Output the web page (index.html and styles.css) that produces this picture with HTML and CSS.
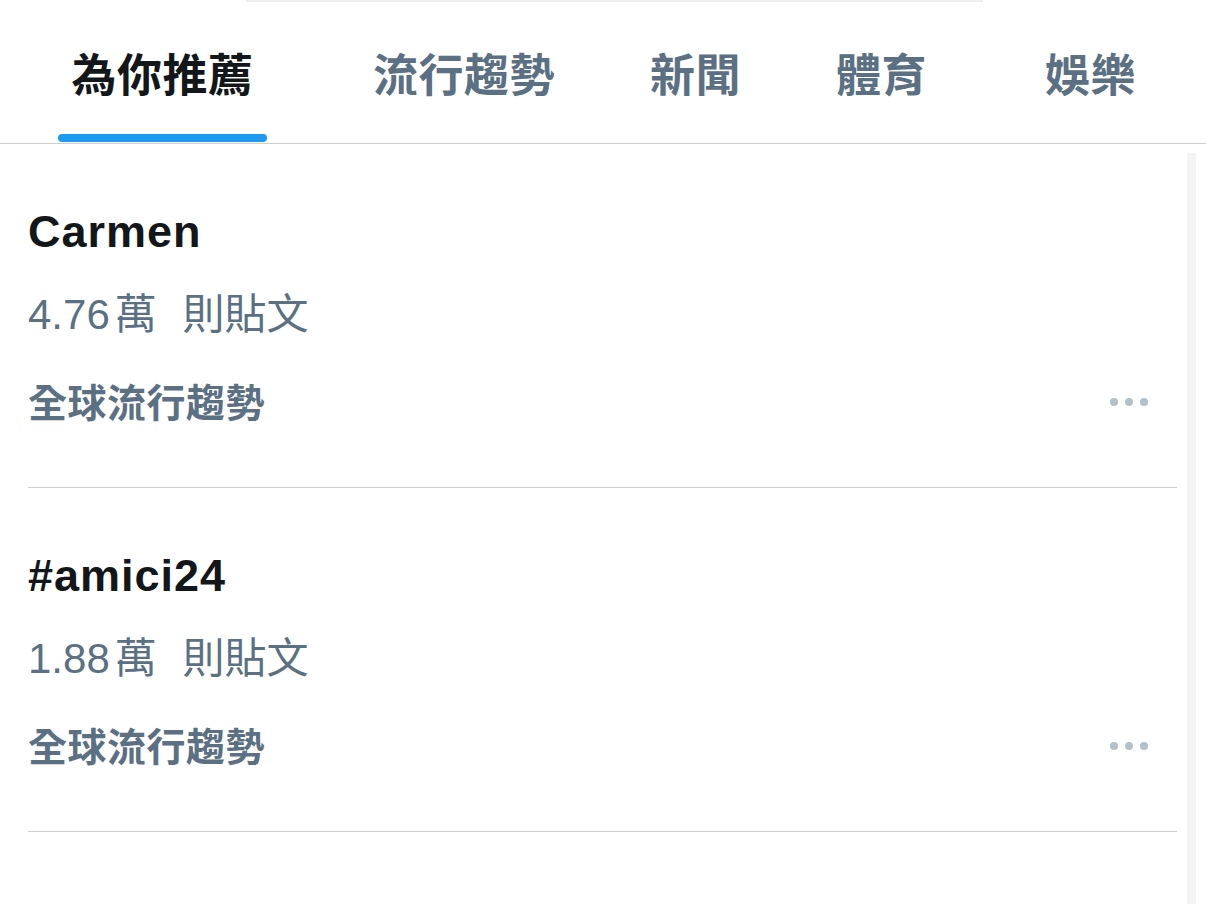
FILE: index.html
```html
<!DOCTYPE html>
<html lang="zh-Hant">
<head>
<meta charset="utf-8">
<title>探索</title>
<link rel="stylesheet" href="styles.css">
</head>
<body>
<div class="page">
  <div class="search-edge"></div>
  <nav class="tabs">
    <div class="tab tab-active">
      <span class="tab-label">為你推薦</span>
      <span class="tab-indicator"></span>
    </div>
    <div class="tab tab-trending"><span class="tab-label">流行趨勢</span></div>
    <div class="tab"><span class="tab-label">新聞</span></div>
    <div class="tab"><span class="tab-label">體育</span></div>
    <div class="tab tab-fun"><span class="tab-label">娛樂</span></div>
  </nav>
  <div class="feed">
    <div class="list">
      <div class="trend">
        <div class="trend-title">Carmen</div>
        <div class="trend-count"><span class="num">4.76</span>萬 則貼文</div>
        <div class="trend-meta">
          <span class="trend-context">全球流行趨勢</span>
          <span class="more"><i></i><i></i><i></i></span>
        </div>
      </div>
      <div class="trend">
        <div class="trend-title">#amici24</div>
        <div class="trend-count"><span class="num">1.88</span>萬 則貼文</div>
        <div class="trend-meta">
          <span class="trend-context">全球流行趨勢</span>
          <span class="more"><i></i><i></i><i></i></span>
        </div>
      </div>
    </div>
    <div class="scrollbar"></div>
  </div>
</div>
</body>
</html>
```

FILE: styles.css
```css
html, body {
  margin: 0;
  padding: 0;
  background: #ffffff;
}

body {
  font-family: "Liberation Sans", "Noto Sans CJK TC", sans-serif;
  color: #14171a;
  width: 1206px;
  height: 904px;
  overflow: hidden;
}

.page {
  display: flex;
  flex-direction: column;
  height: 904px;
}

.search-edge {
  width: 737px;
  height: 2px;
  margin: 0 0 0 246px;
  background: #efefef;
}

.tabs {
  display: flex;
  align-items: flex-start;
  height: 141px;
  border-bottom: 1px solid #cfcfcf;
  padding-left: 58px;
  box-sizing: content-box;
}

.tab {
  display: flex;
  flex-direction: column;
  align-items: center;
  margin-left: 95px;
  padding-top: 41px;
}

.tab-active {
  margin-left: 0;
  width: 209px;
}

.tab-trending {
  margin-left: 106px;
}

.tab-fun {
  margin-left: 118px;
}

.tab-label {
  font-family: "Noto Sans CJK TC", sans-serif;
  font-weight: 700;
  font-size: 45px;
  line-height: 60px;
  color: #5b7083;
  letter-spacing: 0.5px;
}

.tab-active .tab-label {
  color: #14171a;
}

.tab-indicator {
  display: block;
  width: 209px;
  height: 8px;
  margin-top: 31px;
  border-radius: 4px;
  background: #1d9bf0;
}

.feed {
  display: flex;
  flex: 1;
}

.list {
  flex: 1;
  margin-left: 28px;
  margin-right: 10px;
}

.trend {
  height: 344px;
  box-sizing: border-box;
  border-bottom: 1px solid #cfcfcf;
  padding: 62px 29px 0 0;
}

.trend-title {
  font-size: 45px;
  font-weight: 700;
  line-height: 52px;
  color: #14171a;
  letter-spacing: 1px;
}

.trend-count {
  margin-top: 33px;
  font-size: 42px;
  line-height: 48px;
  color: #5b7083;
  word-spacing: 14px;
}

.num {
  margin-right: 5px;
}

.trend-meta {
  display: flex;
  align-items: center;
  justify-content: space-between;
  margin-top: 38px;
}

.trend-context {
  font-family: "Noto Sans CJK TC", sans-serif;
  font-weight: 700;
  font-size: 39px;
  line-height: 46px;
  letter-spacing: 0.5px;
  color: #5b7083;
}

.more {
  display: flex;
  gap: 7px;
  margin-top: 4px;
}

.more i {
  display: block;
  width: 8px;
  height: 8px;
  border-radius: 50%;
  background: #b2c0ca;
}

.scrollbar {
  width: 9px;
  margin-top: 9px;
  margin-right: 10px;
  background: #f4f4f4;
}
```
